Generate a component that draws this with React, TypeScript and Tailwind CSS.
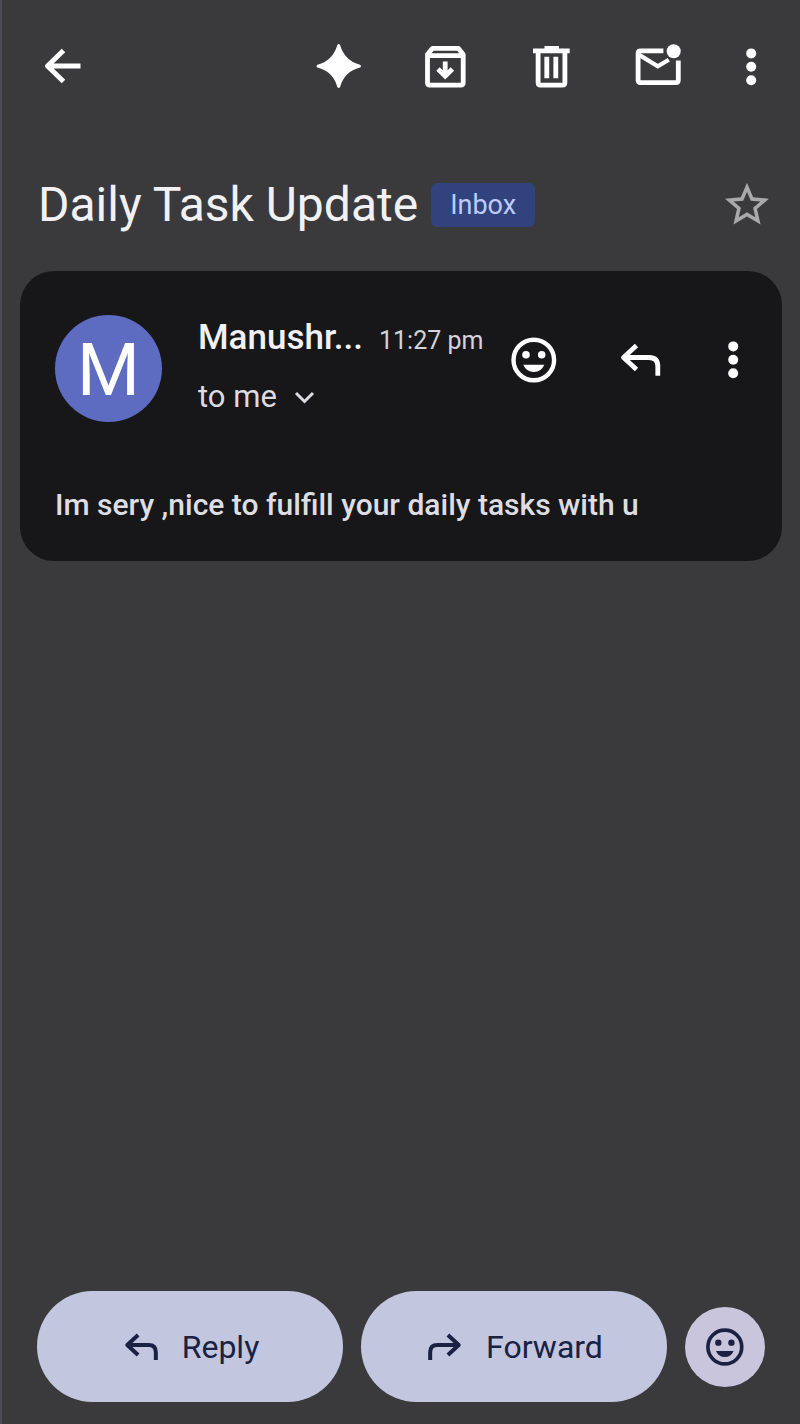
import React from 'react';

interface IconProps {
  className?: string;
}

function BackIcon({ className }: IconProps) {
  return (
    <svg viewBox="0 0 48 48" fill="none" stroke="currentColor" strokeWidth="5" strokeLinejoin="round" className={className}>
      <path d="M25.5 7.5L9.5 23l16 15.5M10 23h32.5" />
    </svg>
  );
}

function SparkleIcon({ className }: IconProps) {
  return (
    <svg viewBox="0 0 48 48" fill="currentColor" className={className}>
      <path d="M21.3 2Q22.7 0 24.1 2Q28.5 17.5 44 21.7Q46 23.2 44 24.6Q28.5 28.5 24.1 44Q22.7 46 21.3 44Q17 28.5 1.5 24.6Q-.5 23.2 1.5 21.7Q17 17.5 21.3 2Z" />
    </svg>
  );
}

function ArchiveIcon({ className }: IconProps) {
  return (
    <svg viewBox="0 0 48 48" fill="none" stroke="currentColor" strokeWidth="4.8" className={className}>
      <path d="M10.5 5.4h26l4.7 6v28.4q0 2.4-2.4 2.4H7.9q-2.4 0-2.4-2.4V11.4z" strokeLinejoin="round" />
      <path d="M5.5 12.6h35.7M23.2 18.6v14M16 26l7.2 7.2 7.2-7.2" />
    </svg>
  );
}

function TrashIcon({ className }: IconProps) {
  return (
    <svg viewBox="0 0 48 48" fill="none" stroke="currentColor" strokeWidth="4.8" className={className}>
      <path d="M5 7.8h36.7M16.5 5.4H31M10.1 8v31.8q0 2.4 2.4 2.4h22q2.4 0 2.4-2.4V8M18.8 13.7v21.6M27.8 13.7v21.6" />
    </svg>
  );
}

function UnreadIcon({ className }: IconProps) {
  return (
    <svg viewBox="0 0 48 48" fill="none" stroke="currentColor" strokeWidth="4.8" className={className}>
      <path d="M29.4 7.8H6.5Q4.1 7.8 4.1 10.2v27q0 2.4 2.4 2.4h35.4q2.4 0 2.4-2.4V17.6" />
      <path d="M4.4 11.4l19.4 12 11-6.6" strokeWidth="4.2" />
      <circle cx="39.7" cy="8.3" r="7" fill="currentColor" stroke="none" />
    </svg>
  );
}

function MoreIcon({ className }: IconProps) {
  return (
    <svg viewBox="0 0 48 48" fill="currentColor" className={className}>
      <circle cx="24.2" cy="10.4" r="5" />
      <circle cx="24.2" cy="23.8" r="5" />
      <circle cx="24.2" cy="37.3" r="5" />
    </svg>
  );
}

function StarIcon({ className }: IconProps) {
  return (
    <svg viewBox="1.1 1.2 21.8 21.8" fill="currentColor" className={className}>
      <path d="M22 9.24l-7.19-.62L12 2 9.19 8.63 2 9.24l5.46 4.73L5.82 21 12 17.27 18.18 21l-1.63-7.03L22 9.24zM12 15.4l-3.76 2.27 1-4.28-3.32-2.88 4.38-.38L12 6.1l1.71 4.04 4.38.38-3.32 2.88 1 4.28L12 15.4z" />
    </svg>
  );
}

function SmileIcon({ className }: IconProps) {
  return (
    <svg viewBox="0 0 48 48" fill="currentColor" className={className}>
      <circle cx="23.8" cy="24" r="20.3" fill="none" stroke="currentColor" strokeWidth="4.4" />
      <circle cx="16" cy="18.8" r="3.8" />
      <circle cx="31.7" cy="18.8" r="3.8" />
      <path d="M13.2 28.8h21.2Q31.2 36 23.8 36T13.2 28.8z" />
    </svg>
  );
}

function ReplyIcon({ className }: IconProps) {
  return (
    <svg viewBox="0 0 48 48" fill="none" stroke="currentColor" strokeWidth="4.8" strokeLinejoin="round" className={className}>
      <path d="M20.5 9.5L7.5 21.5l13 12M8 21.5h25q8.8 0 8.8 8.8v9.4" />
    </svg>
  );
}

function ChevronIcon({ className }: IconProps) {
  return (
    <svg viewBox="0 0 24 24" fill="none" stroke="currentColor" strokeWidth="3" className={className}>
      <path d="M3 8l8.5 8.5L20 8" />
    </svg>
  );
}

export default function App() {
  return (
    <main className="flex min-h-screen flex-col bg-[#3a3a3c] font-['Roboto',sans-serif] text-[#f1f1f4] shadow-[inset_2px_0_0_#4c4d54]">
      <header className="flex items-center justify-between pt-[43px] pr-[25px] pl-[38px] text-white">
        <button type="button" aria-label="Back">
          <BackIcon className="size-12" />
        </button>
        <div className="flex gap-[45px]">
          <div className="flex gap-[58px]">
            <button type="button" aria-label="Gemini">
              <SparkleIcon className="size-12" />
            </button>
            <button type="button" aria-label="Archive">
              <ArchiveIcon className="size-12" />
            </button>
            <button type="button" aria-label="Delete">
              <TrashIcon className="size-12" />
            </button>
            <button type="button" aria-label="Mark as unread">
              <UnreadIcon className="size-12" />
            </button>
          </div>
          <button type="button" aria-label="More options">
            <MoreIcon className="size-12" />
          </button>
        </div>
      </header>

      <div className="mt-[84px] flex items-center justify-between pr-[29px] pl-[38px]">
        <div className="flex items-center gap-[13px]">
          <h1 className="text-[48px] leading-[60px]">Daily Task Update</h1>
          <span className="rounded-md bg-[#31427c] px-[19px] text-[27px] leading-[44px] text-[#bccbfb]">Inbox</span>
        </div>
        <button type="button" aria-label="Star" className="text-[#a9a9ab]">
          <StarIcon className="size-12" />
        </button>
      </div>

      <article className="mt-9 mr-[18px] ml-5 rounded-[34px] bg-[#17171a] pt-11 pr-[25px] pb-9 pl-[35px]">
        <div className="flex">
          <div className="flex size-[107px] shrink-0 items-center justify-center rounded-full bg-[#5d6bc0] pt-1 text-[72px] leading-none text-white">
            M
          </div>
          <div className="ml-9 flex-1">
            <div className="flex items-baseline gap-4 leading-[46px] whitespace-nowrap">
              <span className="text-[35px] font-medium">Manushr...</span>
              <time className="text-[25px] text-[#d4d4d8]">11:27 pm</time>
            </div>
            <button type="button" className="mt-4 flex items-center gap-4 text-[31px] leading-[34px] text-[#dcdce0]">
              to me
              <ChevronIcon className="size-6" />
            </button>
          </div>
          <div className="mt-[21px] flex gap-[45px] self-start text-white">
            <div className="flex gap-[58px]">
              <button type="button" aria-label="Add reaction">
                <SmileIcon className="size-12" />
              </button>
              <button type="button" aria-label="Reply">
                <ReplyIcon className="size-12" />
              </button>
            </div>
            <button type="button" aria-label="Message options">
              <MoreIcon className="size-12" />
            </button>
          </div>
        </div>
        <p className="mt-[63px] text-[30px] leading-10 font-medium text-[#dedee2]">Im sery ,nice to fulfill your daily tasks with u</p>
      </article>

      <footer className="mt-auto flex items-center gap-[18px] pt-10 pr-[35px] pb-[22px] pl-[37px] text-[#1a2142]">
        <button type="button" className="flex h-[111px] flex-1 items-center justify-center gap-[21px] rounded-full bg-[#c2c6df] text-[32px]">
          <ReplyIcon className="size-10" />
          Reply
        </button>
        <button type="button" className="flex h-[111px] flex-1 items-center justify-center gap-[21px] rounded-full bg-[#c2c6df] text-[32px]">
          <ReplyIcon className="size-10 -scale-x-100" />
          Forward
        </button>
        <button type="button" aria-label="React with emoji" className="flex size-20 items-center justify-center rounded-full bg-[#c8c5dc]">
          <SmileIcon className="size-10" />
        </button>
      </footer>
    </main>
  );
}
